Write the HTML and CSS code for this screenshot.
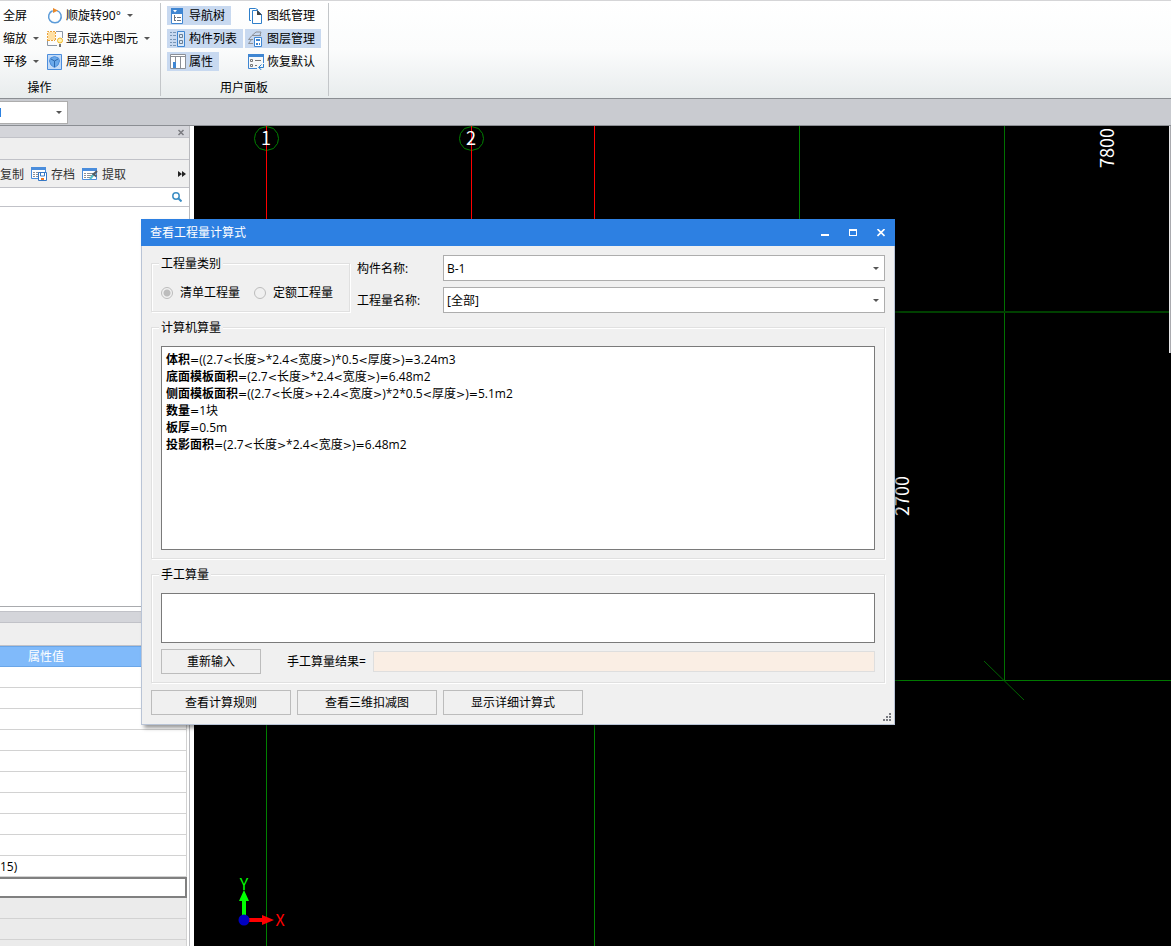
FILE: index.html
```html
<!DOCTYPE html>
<html lang="zh-CN">
<head>
  <meta charset="utf-8">
  <title>查看工程量计算式</title>
  <link rel="stylesheet" href="styles.css">
</head>
<body>
  <div class="ribbon">
    <div class="group view">
      <div class="columns">
        <div class="column first">
          <button class="tool">全屏</button>
          <button class="tool">缩放<i class="arrow"></i></button>
          <button class="tool">平移<i class="arrow"></i></button>
        </div>
        <div class="column">
          <button class="tool">
            <svg width="16" height="16" viewBox="0 0 16 16" fill="none"><path d="M10 2.600A6.300 6.300 0 1 1 5.600 2.700" stroke="#5b9bd8" stroke-width="1.500"/><path d="M6 0l5 2.500L6 5z" fill="#e8892b"/></svg>
            顺旋转90°<i class="arrow"></i>
          </button>
          <button class="tool">
            <svg width="16" height="16" viewBox="0 0 16 16" fill="none"><path d="M.5 9V14.500H10M9 .500h6.500V7" stroke="#8b97a5"/><path d="M1 1h7v8H1z" fill="#ffe0a3"/><path d="M.5 10V.500H8M1 9.500h7M8.500 1v9" stroke="#e8a23c" stroke-dasharray="2 1"/><circle cx="13" cy="9.500" r="2.500" fill="#fff3b0" stroke="#f0b428"/><path d="M12 13h2v3h-2z" fill="#777"/></svg>
            显示选中图元<i class="arrow"></i>
          </button>
          <button class="tool">
            <svg width="16" height="16" viewBox="0 0 16 16" fill="none"><path d="M.5.500h14v15H.5z" fill="#c3dbf7" stroke="#4a8ddc"/><path d="M7.500 2.500l4 1.500 1 3-1.500 4-3.500 2.500L4 11 2.500 7l1-3z" fill="#6aa9ea" stroke="#4a8ddc"/><path d="M4 5l3.500 2L11 5M7.500 7v6" stroke="#2b68ae"/></svg>
            局部三维
          </button>
        </div>
      </div>
      <div class="group-name">操作</div>
    </div>
    <div class="group panels">
      <div class="columns">
        <div class="column">
          <button class="tool on">
            <svg width="16" height="16" viewBox="0 0 16 16" fill="none"><path d="M1.500.500h11v15h-11z" fill="#fff" stroke="#3f86d2"/><path d="M1 0h12v6H1z" fill="#3f86d2"/><path d="M3 2h4L5 4.500z" fill="#fff"/><path d="M4.500 7v5M4 9.500h2M4 12.500h2M7 9.500h4M7 12.500h4" stroke="#6b7480"/></svg>
            导航树
          </button>
          <button class="tool on">
            <svg width="16" height="16" viewBox="0 0 16 16" fill="none"><path d="M0 1.500h2m1 0h3M0 4.500h2m1 0h3M0 8.500h2m1 0h3M0 11.500h2m1 0h3M0 14.500h2m1 0h3" stroke="#7895b5"/><path d="M7.500.500h7v15h-7z" fill="#d9e8f8" stroke="#3f86d2"/><path d="M9.500 3.500h3v3h-3zM9.500 9.500h3v3h-3z" stroke="#6b7f95"/></svg>
            构件列表
          </button>
          <button class="tool on">
            <svg width="16" height="16" viewBox="0 0 16 16" fill="none"><path d="M.5.500h15v14H.5z" fill="#fff" stroke="#8b8f96"/><path d="M1 2.500h14M5.500 2v12M10.500 2v12" stroke="#8b8f96"/><path d="M3 8h3v6H3z" fill="#3f86d2"/></svg>
            属性
          </button>
        </div>
        <div class="column">
          <button class="tool">
            <svg width="16" height="16" viewBox="0 0 16 16" fill="none"><path d="M3 12.500H1.500V.500h6L10 2" stroke="#2e7fcb" fill="#fff"/><path d="M4.500 2.500h5l4 4v9h-9z" fill="#fff" stroke="#2e7fcb"/><path d="M9 2v5h5z" fill="#444"/></svg>
            图纸管理
          </button>
          <button class="tool on">
            <svg width="16" height="16" viewBox="0 0 16 16" fill="none"><path d="M4 4.500L8 1h5l-1 3M5 8.500H.5L4 4.500h9M5 12.500H.5l3-4" stroke="#8b8f96"/><path d="M6.500 6.500h7v9h-7z" fill="#fff" stroke="#3f86d2"/><path d="M8 8h4v2H8zM8 12h2v2H8zM11 12h1v2h-1z" fill="#3f86d2"/></svg>
            图层管理
          </button>
          <button class="tool">
            <svg width="16" height="16" viewBox="0 0 16 16" fill="none"><path d="M9 14.500H.5V.500h15V9" stroke="#3f86d2"/><path d="M0 0h16v3H0z" fill="#3f86d2"/><path d="M2.500 5.500h2v2h-2zM2.500 10.500h2v2h-2zM7 6.500h6M7 11.500h2" stroke="#777"/><path d="M15.500 10v3.500H11M13.500 10.500l-3 3 3 2.500" stroke="#2e7fcb"/></svg>
            恢复默认
          </button>
        </div>
      </div>
      <div class="group-name">用户面板</div>
    </div>
  </div>

  <div class="quickbar">
    <div class="combo small"><select aria-label="楼层"><option></option></select></div>
  </div>

  <div class="workspace">
    <div class="sidebar">
      <div class="panel list-panel">
        <div class="panel-title">
          <button class="icon-button" aria-label="关闭面板"><svg width="8" height="8" viewBox="0 0 8 8"><path d="M1.500 2l5 5M6.500 2l-5 5" stroke="#7a7b80" stroke-width="1.500"/></svg></button>
        </div>
        <div class="panel-tabs"></div>
        <div class="panel-tools">
          <button>复制</button>
          <button>
            <svg width="17" height="16" viewBox="0 0 17 16" fill="none"><path d="M.5 1.500h14v11H.5z" fill="#fff" stroke="#4a8ddc"/><path d="M0 1h15v3H0z" fill="#4a8ddc"/><path d="M2 6.500h2m1 0h8M2 8.500h2m1 0h4M2 10.500h2m1 0h4" stroke="#8b8f96"/><path d="M7.500 6.500h8v8h-8z" fill="#fff" stroke="#3678c5"/><path d="M9.500 7v3h4V7" stroke="#3678c5"/><path d="M10 12h3v2h-3z" fill="#f07820"/></svg>
            存档
          </button>
          <button>
            <svg width="17" height="16" viewBox="0 0 17 16" fill="none"><path d="M.5 2.500h14v11H.5z" fill="#fff" stroke="#4a8ddc"/><path d="M0 2h15v3H0z" fill="#4a8ddc"/><path d="M2 7.500h2m1 0h8M2 9.500h2m1 0h5M2 11.500h2m1 0h3" stroke="#8b8f96"/><path d="M8 13l5-6" stroke="#55c0c8" stroke-width="2"/><path d="M11 9l4-4M10.500 7.500l4 3" stroke="#555b63" stroke-width="2"/></svg>
            提取
          </button>
          <button class="more" aria-label="更多"><svg width="8" height="8" viewBox="0 0 8 8"><path d="M0 1l4 3-4 3zM4 1l4 3-4 3z" fill="#222"/></svg></button>
        </div>
        <div class="search">
          <input type="text" aria-label="搜索构件">
          <svg width="10" height="10" viewBox="0 0 10 10" fill="none"><circle cx="4" cy="4" r="3.200" stroke="#3c8ec4" stroke-width="1.500"/><path d="M6 6l3.500 3.500" stroke="#3c8ec4" stroke-width="2"/></svg>
        </div>
      </div>
      <div class="panel props-panel">
        <div class="panel-title"></div>
        <div class="panel-tabs"></div>
        <table class="props">
          <thead><tr><th>属性值</th></tr></thead>
          <tbody>
            <tr><td></td></tr>
            <tr><td></td></tr>
            <tr><td></td></tr>
            <tr><td></td></tr>
            <tr><td></td></tr>
            <tr><td></td></tr>
            <tr><td></td></tr>
            <tr><td></td></tr>
            <tr><td></td></tr>
            <tr><td>15)</td></tr>
            <tr class="selected"><td></td></tr>
            <tr class="locked"><td></td></tr>
            <tr class="locked"><td></td></tr>
            <tr class="locked"><td></td></tr>
          </tbody>
        </table>
      </div>
    </div>

    <div class="drawing">
      <svg class="axes" width="100%" height="100%" fill="none">
        <g stroke="#008000">
          <path d="M72.500 0V2000M400.500 0V2000M605.500 0V480"/>
          <path d="M810.500 0V554" stroke="#007000"/>
          <path d="M300 554.500H3000" stroke="#007800"/>
          <path d="M300 186H3000" stroke="#004000" stroke-width="2"/>
          <path d="M790 535l40 39" stroke="#006400"/>
          <path d="M72.500.500l7 2 4 5 1 5-1 5-4 5-7 2-7-2-4-5-1-5 1-5 4-5zM277.500.500l7 2 4 5 1 5-1 5-4 5-7 2-7-2-4-5-1-5 1-5 4-5z"/>
        </g>
        <path d="M72.500 0V300M277.500 0V300M400.500 0V300" stroke="#ff0000"/>
        <g class="axis-name">
          <text x="72" y="19">1</text>
          <text x="277" y="19">2</text>
        </g>
        <g class="size">
          <text transform="translate(920 42) rotate(-90)">7800</text>
          <text transform="translate(715 390) rotate(-90)">2700</text>
        </g>
        <path d="M48 790v-15h-3l5-11 5 11h-3v15z" fill="#00ff00"/>
        <path d="M54 792h14v-3l12 5-12 5v-3H54z" fill="#ff0000"/>
        <circle cx="50" cy="794" r="5.500" fill="#0000c0"/>
        <g class="axis-letter">
          <text x="50" y="764" fill="#00ff00">Y</text>
          <text x="86" y="800" fill="#ff0000">X</text>
        </g>
      </svg>
      <div class="scroll-edge"></div>
    </div>
  </div>

  <div class="dialog" role="dialog" aria-labelledby="dialogTitle">
    <div class="dialog-title">
      <span id="dialogTitle">查看工程量计算式</span>
      <div class="window-buttons">
        <button class="icon-button" aria-label="最小化"><svg width="8" height="8" viewBox="0 0 8 8"><path d="M0 5h8v2H0z" fill="#fff"/></svg></button>
        <button class="icon-button" aria-label="最大化"><svg width="8" height="8" viewBox="0 0 8 8"><path d="M0 0h8v7H0zM1 2v4h6V2z" fill="#fff" fill-rule="evenodd"/></svg></button>
        <button class="icon-button" aria-label="关闭"><svg width="8" height="8" viewBox="0 0 8 8"><path d="M.5 0l7 7M7.500 0l-7 7" stroke="#fff" stroke-width="1.600"/></svg></button>
      </div>
    </div>
    <div class="dialog-body">
      <div class="top-row">
        <fieldset class="kind">
          <legend>工程量类别</legend>
          <label><input type="radio" name="kind" checked disabled>清单工程量</label>
          <label><input type="radio" name="kind" disabled>定额工程量</label>
        </fieldset>
        <div class="names">
          <label for="partName">构件名称:</label>
          <div class="combo"><select id="partName"><option>B-1</option></select></div>
          <label for="quantityName">工程量名称:</label>
          <div class="combo"><select id="quantityName"><option>[全部]</option></select></div>
        </div>
      </div>

      <fieldset class="computed">
        <legend>计算机算量</legend>
        <div class="result">
          <div><b>体积</b><i>=</i>((2.7<i>&lt;</i>长度<i>&gt;</i>*2.4<i>&lt;</i>宽度<i>&gt;</i>)*0.5<i>&lt;</i>厚度<i>&gt;</i>)<i>=</i>3.24m3</div>
          <div><b>底面模板面积</b><i>=</i>(2.7<i>&lt;</i>长度<i>&gt;</i>*2.4<i>&lt;</i>宽度<i>&gt;</i>)<i>=</i>6.48m2</div>
          <div><b>侧面模板面积</b><i>=</i>((2.7<i>&lt;</i>长度<i>&gt;+</i>2.4<i>&lt;</i>宽度<i>&gt;</i>)*2*0.5<i>&lt;</i>厚度<i>&gt;</i>)<i>=</i>5.1m2</div>
          <div><b>数量</b><i>=</i>1块</div>
          <div><b>板厚</b><i>=</i>0.5m</div>
          <div><b>投影面积</b><i>=</i>(2.7<i>&lt;</i>长度<i>&gt;</i>*2.4<i>&lt;</i>宽度<i>&gt;</i>)<i>=</i>6.48m2</div>
        </div>
      </fieldset>

      <fieldset class="manual">
        <legend>手工算量</legend>
        <textarea aria-label="手工算量"></textarea>
        <div class="manual-row">
          <button class="btn">重新输入</button>
          <label for="manualResult">手工算量结果=</label>
          <input id="manualResult" type="text" readonly>
        </div>
      </fieldset>

      <div class="actions">
        <button class="btn">查看计算规则</button>
        <button class="btn">查看三维扣减图</button>
        <button class="btn">显示详细计算式</button>
      </div>
    </div>
    <svg class="grip" width="8" height="8" viewBox="0 0 8 8"><path d="M6 0h2v2H6zM3 3h2v2H3zM6 3h2v2H6zM0 6h2v2H0zM3 6h2v2H3zM6 6h2v2H6z" fill="#77797f"/></svg>
  </div>
</body>
</html>
```
FILE: styles.css
```css
* {
  box-sizing: border-box;
}

body {
  margin: 0;
  height: 100vh;
  display: flex;
  flex-direction: column;
  overflow: hidden;
  position: relative;
  font-family: "Open Sans", "Noto Sans CJK SC", sans-serif;
  font-size: 12px;
  line-height: 17px;
  color: #000;
}

button, input, select, textarea {
  font: inherit;
  color: inherit;
  margin: 0;
}

button {
  background: none;
  border: 0;
  padding: 0;
  white-space: nowrap;
}

svg {
  display: block;
  flex: none;
}

/* ribbon */
.ribbon {
  display: flex;
  flex: none;
  height: 98px;
  padding-top: 2px;
  border-top: 1px solid #d5d5d7;
  background: linear-gradient(#fff, #fbfcfc 50%, #e8eced);
}

.group {
  display: flex;
  flex-direction: column;
  padding: 3px 7px 0 0;
  height: 93px;
  border-right: 1px solid #c3c6c9;
}

.group.view {
  padding-right: 5px;
}

.group.panels {
  padding-left: 6px;
}

.columns {
  display: flex;
  gap: 2px;
}

.column {
  display: flex;
  flex-direction: column;
  align-items: flex-start;
  gap: 4px;
}

.column.first {
  width: 42px;
}

.tool {
  display: flex;
  align-items: center;
  gap: 3px;
  height: 19px;
  padding: 0 6px 0 3px;
}

.arrow {
  width: 0;
  height: 0;
  margin-left: 3px;
  border: 3px solid transparent;
  border-top-color: #555;
  border-bottom: 0;
}

.tool.on {
  background: #c8d9f0;
}

.view .tool {
  padding-right: 5px;
}

.group-name {
  margin-top: 8px;
  text-align: center;
}

.view .group-name {
  padding-right: 76px;
}

/* bar under the ribbon */
.quickbar {
  flex: none;
  height: 28px;
  padding: 2px 0 0;
  border-top: 1px solid #8b8e93;
  border-bottom: 1px solid #8b8e93;
  background: #c9cbd0;
}

.combo {
  position: relative;
  min-width: 0;
}

.combo select {
  display: block;
  width: 100%;
  height: 26px;
  padding: 0 3px;
  appearance: none;
  background: #fff;
  border: 1px solid #adadad;
  border-radius: 0;
}

.combo::after {
  content: "";
  position: absolute;
  right: 6px;
  top: 12px;
  border: 3px solid transparent;
  border-top-color: #555;
  border-bottom: 0;
}

.combo.small {
  width: 68px;
}

.combo.small select {
  height: 23px;
  border-left: 0;
}

.combo.small::after {
  top: 10px;
}

.combo.small::before {
  content: "";
  position: absolute;
  left: 0;
  top: 7px;
  width: 1px;
  height: 9px;
  background: #2b80e0;
}

/* left side */
.workspace {
  flex: 1;
  display: flex;
  min-height: 0;
}

.sidebar {
  flex: none;
  width: 194px;
  padding-right: 4px;
  display: flex;
  flex-direction: column;
  gap: 4px;
  background: #fff;
}

.panel {
  border-right: 1px solid #b9babe;
  overflow: hidden;
}

.list-panel {
  flex: none;
  height: 481px;
  border-bottom: 1px solid #a9abae;
}

.props-panel {
  flex: 1;
}

.panel-title {
  height: 12px;
  display: flex;
  align-items: center;
  justify-content: flex-end;
  padding-right: 4px;
  background: #d4d5da;
  border-bottom: 1px solid #c1c2c8;
}

.props-panel .panel-title {
  border-top: 1px solid #c1c2c8;
}

.panel-tabs {
  height: 22px;
  background: #efefef;
  border-bottom: 1px solid #c1c2c8;
}

.props-panel .panel-tabs {
  height: 23px;
}

.panel-tools {
  display: flex;
  align-items: center;
  gap: 7px;
  height: 28px;
  padding: 1px 3px 0 0;
  background: #efefef;
  border-bottom: 1px solid #c1c2c8;
}

.panel-tools button {
  display: flex;
  align-items: center;
  gap: 3px;
  color: #333;
}

.panel-tools .more {
  margin-left: auto;
}

.search {
  display: flex;
  align-items: center;
  height: 19px;
  padding-right: 7px;
  border-bottom: 1px solid #c1c2c8;
}

.search input {
  flex: 1;
  min-width: 0;
  height: 17px;
  border: 0;
  outline: 0;
}

.icon-button {
  display: block;
}

.props {
  width: 187px;
  border-collapse: separate;
  border-spacing: 0;
}

.props th {
  height: 21px;
  padding: 0 0 0 28px;
  text-align: left;
  font-weight: normal;
  color: #fff;
  background: #80bafa;
  border-top: 1px solid #6aa6e8;
  border-bottom: 1px solid #6aa6e8;
}

.props td {
  height: 21px;
  padding: 0;
  border-right: 1px solid #d2d2d2;
  border-bottom: 1px solid #d2d2d2;
}

.props .selected td {
  border: 2px solid #808080;
  border-left: 0;
}

.props .locked td {
  background: #ebebeb;
}

/* drawing area */
.drawing {
  flex: 1;
  min-width: 0;
  position: relative;
  background: #000;
  overflow: hidden;
}

.axes {
  position: absolute;
  inset: 0;
}

.axes text {
  font-family: "Noto Sans CJK SC", sans-serif;
  font-size: 18px;
}

.axis-name text, .size text {
  fill: #fff;
}

.axis-name text, .axis-letter text {
  text-anchor: middle;
}

.axes .axis-letter text {
  font-size: 16px;
}

.scroll-edge {
  position: absolute;
  top: 0;
  right: 0;
  width: 2px;
  height: 227px;
  background: #a9aaae;
  border-left: 1px solid #e6e6e8;
}

/* dialog */
.dialog {
  position: absolute;
  left: 141px;
  top: 219px;
  width: 754px;
  background: #f0f0f0;
  border: 1px solid #b9c4d6;
  border-top: 0;
  box-shadow: 3px 3px 4px rgba(0, 0, 0, 0.4);
}

.dialog-title {
  display: flex;
  align-items: center;
  justify-content: space-between;
  height: 27px;
  margin: 0 -1px;
  padding: 0 10px 0 9px;
  color: #fff;
  background: #2d80e2;
}

.window-buttons {
  display: flex;
  gap: 20px;
}

.dialog-body {
  padding: 9px;
}

.top-row {
  display: flex;
  gap: 7px;
}

fieldset {
  min-width: 0;
  margin: 0;
  padding: 0 9px;
  border: 1px solid #e0e0e0;
  box-shadow: 1px 1px 0 #fff, inset 1px 1px 0 #fff;
}

legend {
  padding: 0 2px;
  margin-left: -2px;
  background: #f0f0f0;
}

.kind {
  flex: none;
  width: 199px;
  height: 57px;
  display: flex;
  gap: 14px;
  padding-top: 12px;
}

.kind label {
  display: flex;
  flex: none;
  gap: 7px;
  align-items: center;
  height: 17px;
  white-space: nowrap;
}

.kind input {
  appearance: none;
  width: 12px;
  height: 12px;
  border: 1px solid #bcbcbc;
  border-radius: 50%;
}

.kind input:checked {
  background: radial-gradient(#bcbcbc 3px, transparent 4px);
}

.names {
  flex: 1;
  display: grid;
  grid-template-columns: 86px 1fr;
  gap: 6px 0;
  align-items: center;
}

.computed {
  margin-top: 6px;
  padding-bottom: 8px;
}

.result {
  height: 204px;
  margin-top: 10px;
  padding: 4px;
  background: #fff;
  border: 1px solid #7a7a7a;
}

/* wide operator signs */
.result i {
  font-family: "DejaVu Sans", sans-serif;
  font-size: 11px;
  font-style: normal;
  line-height: 1;
}

.manual {
  margin-top: 7px;
  padding-bottom: 8px;
}

.manual textarea {
  display: block;
  width: 100%;
  height: 50px;
  margin-top: 10px;
  resize: none;
  background: #fff;
  border: 1px solid #7a7a7a;
  border-radius: 0;
}

.manual-row {
  display: flex;
  align-items: center;
  gap: 7px;
  margin-top: 6px;
}

.manual-row label {
  margin-left: 19px;
}

.manual-row input {
  flex: 1;
  min-width: 0;
  height: 21px;
  background: #faeee4;
  border: 1px solid #dedede;
}

.btn {
  width: 140px;
  height: 25px;
  background: #f0f0f0;
  border: 1px solid #bcbcbc;
}

.manual-row .btn {
  width: 100px;
}

.actions {
  display: flex;
  gap: 6px;
  margin-top: 7px;
}

.grip {
  position: absolute;
  right: 3px;
  bottom: 3px;
}
```
